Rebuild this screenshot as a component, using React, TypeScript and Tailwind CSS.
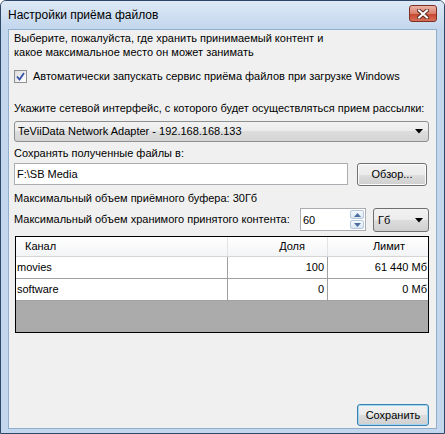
import React from "react";

const rows = [
  { name: "movies", share: "100", limit: "61 440 Мб" },
  { name: "software", share: "0", limit: "0 Мб" },
];

const Arrow = () => (
  <svg width="8" height="5" viewBox="0 0 8 5">
    <path d="M0 0h8L4 4.5z" fill="#000" />
  </svg>
);

const Button = ({
  children,
  className = "",
  primary = false,
}: {
  children: React.ReactNode;
  className?: string;
  primary?: boolean;
}) => (
  <button
    type="button"
    className={`flex items-center justify-center rounded-[3px] border text-[11px] text-black ${
      primary
        ? "border-[#3c7fb1] shadow-[inset_0_0_0_1px_#9fd6f2]"
        : "border-[#707070] shadow-[inset_0_0_0_1px_#fcfcfc]"
    } bg-[linear-gradient(#f2f2f2_0%,#ebebeb_50%,#dddddd_50%,#cfcfcf_100%)] ${className}`}
  >
    {children}
  </button>
);

const Checkbox = () => (
  <div className="flex h-[13px] w-[13px] items-center justify-center border border-[#8e8f8f] bg-[linear-gradient(135deg,#dcdcdc,#ffffff)]">
    <svg width="9" height="9" viewBox="0 0 9 9">
      <path d="M1 4.5l2.5 3L8 1" fill="none" stroke="#3353a8" strokeWidth="1.8" />
    </svg>
  </div>
);

const Spinner = () => (
  <div className="flex w-[15px] flex-col gap-[1px] py-[1px] pr-[1px]">
    <div className="flex h-[9px] items-center justify-center rounded-[2px] border border-[#b5c7dc] bg-[linear-gradient(#f5f9fd,#dbe7f4)]">
      <svg width="7" height="4" viewBox="0 0 7 4">
        <path d="M0 4h7L3.5 0z" fill="#4d6d9c" />
      </svg>
    </div>
    <div className="flex h-[9px] items-center justify-center rounded-[2px] border border-[#b5c7dc] bg-[linear-gradient(#f5f9fd,#dbe7f4)]">
      <svg width="7" height="4" viewBox="0 0 7 4">
        <path d="M0 0h7L3.5 4z" fill="#4d6d9c" />
      </svg>
    </div>
  </div>
);

export default function App() {
  return (
    <div className="h-[434px] w-[445px] font-['Liberation_Sans',Arial,sans-serif] text-[11px] text-black">
      <div className="flex h-full flex-col rounded-t-[6px] border border-[#2c4866] bg-[#c2d6ed]">
        {/* title bar */}
        <div className="flex h-[28px] items-center justify-between rounded-t-[5px] bg-[linear-gradient(#dde9f6,#c2d6ed)] pl-[7px] pr-[7px]">
          <span className="text-[12px] text-black">Настройки приёма файлов</span>
          <div className="mb-[3px] flex h-[17px] w-[28px] items-center justify-center rounded-[3px] border border-[#7f2f22] bg-[linear-gradient(#ebb3a5,#d9806c_50%,#c7442c_51%,#d7705a)]">
            <svg width="12" height="10" viewBox="0 0 12 10">
              <path d="M2 1.5l8 7M10 1.5l-8 7" stroke="#5b2a22" strokeWidth="4" strokeLinecap="square" />
              <path d="M2 1.5l8 7M10 1.5l-8 7" stroke="#fff" strokeWidth="2" strokeLinecap="square" />
            </svg>
          </div>
        </div>

        {/* client area */}
        <div className="mx-[7px] mb-[4px] flex flex-1 flex-col border border-[#92aecd] bg-[#f0f0f0] pl-[5px] pr-[7px] pt-[1px]">
          <p className="leading-[14px]">
            Выберите, пожалуйста, где хранить принимаемый контент и
            <br />
            какое максимальное место он может занимать
          </p>

          <label className="mt-[10px] flex h-[14px] items-center gap-[6px]">
            <Checkbox />
            <span>Автоматически запускать сервис приёма файлов при загрузке Windows</span>
          </label>

          <div className="mt-[18px] leading-[14px]">
            Укажите сетевой интерфейс, с которого будет осуществляться прием рассылки:
          </div>
          <div className="mt-[6px] flex h-[21px] items-center justify-between rounded-[3px] border border-[#8e8f8f] bg-[linear-gradient(#f2f2f2_0%,#ebebeb_50%,#dddddd_50%,#d4d4d4_100%)] pl-[3px] pr-[5px]">
            <span>TeViiData Network Adapter - 192.168.168.133</span>
            <Arrow />
          </div>

          <div className="mt-[4px] leading-[14px]">Сохранять полученные файлы в:</div>
          <div className="mt-[3px] flex items-start gap-[9px]">
            <div className="flex h-[22px] w-[334px] items-center border border-[#abadb3] bg-white pl-[2px]">
              F:\SB Media
            </div>
            <Button className="h-[23px] w-[70px]">Обзор...</Button>
          </div>

          <div className="mt-[5px] leading-[14px]">Максимальный объем приёмного буфера: 30Гб</div>
          <div className="mt-[3px] flex items-start">
            <span className="mt-[4px] flex-1 leading-[14px]">
              Максимальный объем хранимого принятого контента:
            </span>
            <div className="flex h-[23px] w-[66px] items-stretch border border-[#abadb3] bg-white">
              <span className="flex-1 pl-[2px] pt-[3px]">60</span>
              <Spinner />
            </div>
            <div className="ml-[7px] flex h-[24px] w-[56px] items-center justify-between rounded-[3px] border border-[#707070] bg-[linear-gradient(#f2f2f2_0%,#ebebeb_50%,#dddddd_50%,#cfcfcf_100%)] pl-[4px] pr-[5px]">
              <span>Гб</span>
              <Arrow />
            </div>
          </div>

          {/* channels table */}
          <div className="ml-[1px] mt-[4px] flex h-[97px] flex-col border border-black bg-[#ababab]">
            <div className="grid h-[20px] grid-cols-[212px_100px_1fr] border-b border-[#d5d5d5] bg-[linear-gradient(#ffffff,#f3f4f6)]">
              <div className="flex items-center border-r border-[#e3e3e3] pl-[9px]">Канал</div>
              <div className="flex items-center justify-end border-r border-[#e3e3e3] pr-[22px]">Доля</div>
              <div className="flex items-center justify-end pr-[23px]">Лимит</div>
            </div>
            {rows.map((r) => (
              <div
                key={r.name}
                className="grid h-[22px] grid-cols-[212px_100px_1fr] border-b border-[#a0a0a0] bg-white"
              >
                <div className="flex items-center border-r border-[#a0a0a0] pl-[1px]">{r.name}</div>
                <div className="flex items-center justify-end border-r border-[#a0a0a0] pr-[3px]">{r.share}</div>
                <div className="flex items-center justify-end pr-[1px]">{r.limit}</div>
              </div>
            ))}
          </div>

          <div className="flex flex-1 items-end justify-end pb-[2px]">
            <Button primary className="h-[22px] w-[72px]">
              Сохранить
            </Button>
          </div>
        </div>
      </div>
    </div>
  );
}
